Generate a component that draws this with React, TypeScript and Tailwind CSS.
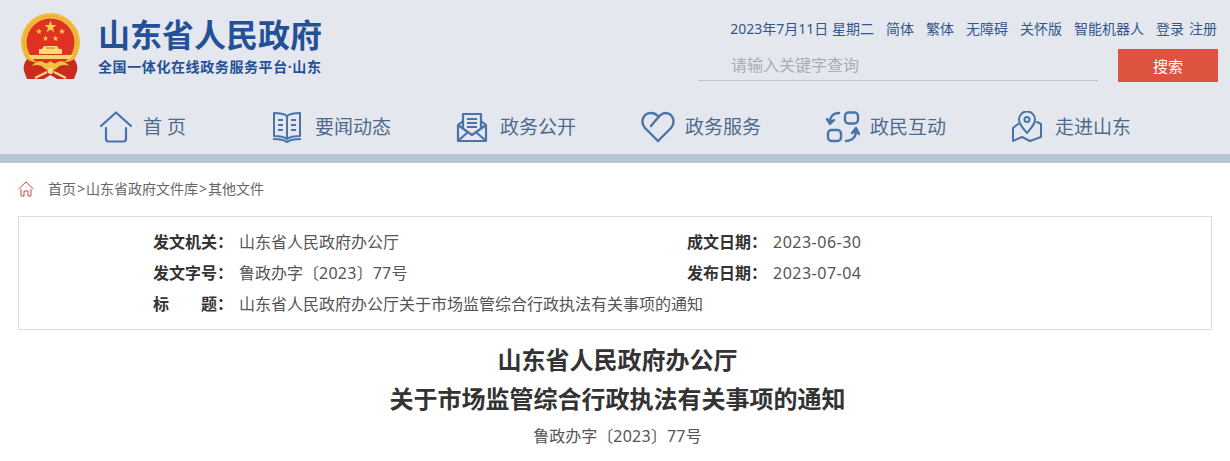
const cjk = "font-['Noto_Sans','Noto_Sans_CJK_SC',sans-serif]";

function star(cx: number, cy: number, r: number) {
    const pts: string[] = [];
    for (let i = 0; i < 10; i++) {
        const rad = i % 2 === 0 ? r : r * 0.4;
        const a = (Math.PI / 5) * i - Math.PI / 2;
        pts.push(`${(cx + rad * Math.cos(a)).toFixed(2)},${(cy + rad * Math.sin(a)).toFixed(2)}`);
    }
    return pts.join(" ");
}

function Emblem() {
    return (
        <svg width="62" height="66" viewBox="0 0 62 66">
            <circle cx="30.500" cy="29.500" r="29.500" fill="#f0bd3f" />
            <circle cx="30.500" cy="29.500" r="26.500" fill="none" stroke="#e5a92e" strokeWidth="1" />
            <circle cx="30.500" cy="29.500" r="24" fill="#e03222" />
            <polygon points={star(30.5, 14, 6.5)} fill="#f8d04a" />
            <polygon points={star(19, 18.5, 3.2)} fill="#f8d04a" />
            <polygon points={star(42, 18.5, 3.2)} fill="#f8d04a" />
            <polygon points={star(25.5, 25.5, 3)} fill="#f8d04a" />
            <polygon points={star(35.5, 25.5, 3)} fill="#f8d04a" />
            <path d="M24 33 L37 33 L39 36 L42 36 L42 41 L19 41 L19 36 L22 36Z" fill="#f8dc7c" />
            <rect x="26" y="34" width="9" height="2" fill="#e8a93a" />
            <path d="M8 42 H53 L50 46 H11Z" fill="#f7d670" />
            <path d="M7 46 C4 50 3 54 4 58 L7 66 L24 66 L30.500 62 L37 66 L54 66 L57 58 C58 54 57 50 54 46 C48 51 38 49 30.500 49 C23 49 13 51 7 46Z" fill="#cb2a1f" />
            <path d="M12 53 C15 48 21 47 25 50 C27 51 29 49 30.500 48 C32 49 34 51 36 50 C40 47 46 48 49 53 C44 51 40 52 37 55 C34 58 27 58 24 55 C21 52 17 51 12 53Z" fill="#f2c23e" />
            <circle cx="30.500" cy="58" r="3" fill="#f8dc7c" />
            <path d="M15 65 L27 59 M46 65 L34 59" stroke="#f8dc7c" strokeWidth="2" />
        </svg>
    );
}

const navIcons = {
    home: (
        <svg width="34" height="32" viewBox="0 0 34 32" fill="none" stroke="#4a74a8" strokeWidth="2.200" strokeLinecap="round" strokeLinejoin="round">
            <path d="M2 15 L17 1.500 L32 15" />
            <path d="M7 17 V28 a2.500 2.500 0 0 0 2.500 2.500 H24.500 a2.500 2.500 0 0 0 2.500 -2.500 V17" />
        </svg>
    ),
    book: (
        <svg width="32" height="32" viewBox="0 0 32 32" fill="none" stroke="#4a74a8" strokeWidth="2" strokeLinejoin="round">
            <path d="M16 5 C12 2 6 2 3 2 V25 C7 25 12 25 16 28 C20 25 25 25 29 25 V2 C26 2 20 2 16 5Z" />
            <path d="M16 5 V28" />
            <path d="M7 9 H12 M7 14 H12 M7 19 H12 M20 9 H25 M20 14 H25 M20 19 H25" />
            <path d="M2 28 C7 28 12 28 16 31 C20 28 25 28 30 28" strokeWidth="2.200" />
        </svg>
    ),
    mail: (
        <svg width="32" height="32" viewBox="0 0 32 32" fill="none" stroke="#4a74a8" strokeWidth="2.200" strokeLinejoin="round">
            <path d="M7 17 V3 H25 V17" />
            <path d="M11 8 H21 M11 12 H21 M11 16 H21" />
            <path d="M7 10 L2 14 V30 H30 V14 L25 10" />
            <path d="M2 14 L16 24 L30 14" />
            <path d="M2 30 L12 21 M30 30 L20 21" />
        </svg>
    ),
    heart: (
        <svg width="34" height="32" viewBox="0 0 34 32" fill="none" stroke="#4a74a8" strokeWidth="2.400" strokeLinecap="round" strokeLinejoin="round">
            <path d="M17 30 L4 17 C-1 11 2 2 10 2 C13 2 15 3 17 5" />
            <path d="M17 30 L30 17 C35 11 32 2 24 2 C21 2 19.500 3.500 10 15" />
        </svg>
    ),
    swap: (
        <svg width="34" height="32" viewBox="0 0 34 32" fill="none" stroke="#4a74a8" strokeWidth="2.400" strokeLinecap="round" strokeLinejoin="round">
            <rect x="19" y="1.500" width="13" height="11" rx="3.500" />
            <rect x="2" y="19" width="13" height="11" rx="3.500" />
            <path d="M13 2 C7 2 4 6 4 11" />
            <path d="M1 8 L4 13 L8 9" fill="#4a74a8" />
            <path d="M20 30 C26 30 30 26 30 20" />
            <path d="M26 22 L30 17 L33 23" fill="#4a74a8" />
        </svg>
    ),
    map: (
        <svg width="32" height="32" viewBox="0 0 32 32" fill="none" stroke="#4a74a8" strokeWidth="2" strokeLinecap="round" strokeLinejoin="round">
            <path d="M16 22 C11 16 8 13 8 8.500 A8 8 0 0 1 24 8.500 C24 13 21 16 16 22Z" />
            <circle cx="16" cy="8.500" r="2.500" />
            <path d="M7 13 L2 17 V30 L11 26 L19 30 L30 26 V13 L26 11" />
        </svg>
    ),
};

function NavItem({icon, label, className}: {icon: React.ReactNode; label: string; className: string}) {
    return (
        <a className={`flex items-center pt-[11px] ${className}`}>
            <span className="flex w-[44px] shrink-0 items-center">{icon}</span>
            <span className="text-[19px] leading-[28px] text-[#4e6a8e]">{label}</span>
        </a>
    );
}

function InfoRow({label, value, className}: {label: React.ReactNode; value: React.ReactNode; className: string}) {
    return (
        <div className={`flex h-[31px] items-center text-[16px] ${className}`}>
            <b className="w-[86px] shrink-0 font-bold text-[#333]">{label}</b>
            <span className="whitespace-nowrap text-[#555]">{value}</span>
        </div>
    );
}

function Num({children}: {children: React.ReactNode}) {
    return <span className="tracking-[0.5px]">{children}</span>;
}

function DocNo() {
    return <>鲁政办字〔<span className="tracking-[0.25px]">2023</span>〕<span className="tracking-[0.25px]">77</span>号</>;
}

export default function App() {
    const links = ["简体", "繁体", "无障碍", "关怀版", "智能机器人"];

    return (
        <div className={`h-[461px] w-[1230px] overflow-hidden bg-white ${cjk}`}>
            <header className="h-[163px] border-b-[9px] border-[#b5c6d7] bg-[#e4e8ee]">
                <div className="flex h-[100px] justify-between pl-[20px] pr-[12px]">
                    <div className="flex pt-[13px]">
                        <Emblem />
                        <div className="ml-[16px]">
                            <h1 className="mt-[3px] text-[32px] font-bold leading-[38px] text-[#245097]">山东省人民政府</h1>
                            <p className="mt-[3px] text-[14px] font-bold leading-[20px] tracking-[0.6px] text-[#245097]">全国一体化在线政务服务平台·山东</p>
                        </div>
                    </div>
                    <div className="w-[520px] pt-[18px]">
                        <div className="flex h-[20px] items-center justify-end pr-[1px] text-[14px] text-[#34568b]">
                            <span>2023年7月11日 星期二</span>
                            {links.map((l) => (
                                <a key={l} className="ml-[12px]">{l}</a>
                            ))}
                            <a className="ml-[12px]">登录</a>
                            <a className="ml-[5px]">注册</a>
                        </div>
                        <div className="mt-[11px] flex justify-between">
                            <div className="h-[32px] w-[400px] border-b border-[#bcc4d0] pl-[33px] text-[16px] leading-[33px] text-[#a9aeb5]">请输入关键字查询</div>
                            <button className="h-[33px] w-[100px] bg-[#dd5340] pt-[2px] text-[15px] text-white">搜索</button>
                        </div>
                    </div>
                </div>
                <nav className="flex h-[54px] items-start pl-[99px]">
                    <NavItem icon={navIcons.home} label="首 页" className="w-[172px]" />
                    <NavItem icon={navIcons.book} label="要闻动态" className="w-[185px]" />
                    <NavItem icon={navIcons.mail} label="政务公开" className="w-[185px]" />
                    <NavItem icon={navIcons.heart} label="政务服务" className="w-[185px]" />
                    <NavItem icon={navIcons.swap} label="政民互动" className="w-[185px]" />
                    <NavItem icon={navIcons.map} label="走进山东" className="w-[185px]" />
                </nav>
            </header>

            <div className="flex h-[53px] items-center pb-[2px] pl-[18px] text-[14px] text-[#666]">
                <svg width="16" height="16" viewBox="0 0 16 16" fill="none" stroke="#c8464a" strokeWidth="1" strokeLinejoin="round" className="mr-[14px]">
                    <path d="M.5 8 L8 1 L15.500 8" />
                    <path d="M3 8 V15 H6 V10 H10 V15 H13 V8" />
                </svg>
                <span>首页<span className="mx-[1px]">&gt;</span>山东省政府文件库<span className="mx-[1px]">&gt;</span>其他文件</span>
            </div>

            <section className="mx-[18px] h-[114px] border border-[#dcdcdc] pt-[9px]">
                <div className="flex pl-[134px]">
                    <InfoRow label="发文机关：" value="山东省人民政府办公厅" className="w-[534px]" />
                    <InfoRow label="成文日期：" value={<Num>2023-06-30</Num>} className="" />
                </div>
                <div className="flex pl-[134px]">
                    <InfoRow label="发文字号：" value={<DocNo />} className="w-[534px]" />
                    <InfoRow label="发布日期：" value={<Num>2023-07-04</Num>} className="" />
                </div>
                <div className="pl-[134px]">
                    <InfoRow
                        label={<span className="flex w-[80px] justify-between"><span>标</span><span>题：</span></span>}
                        value="山东省人民政府办公厅关于市场监管综合行政执法有关事项的通知"
                        className=""
                    />
                </div>
            </section>

            <article className="w-[1235px] pt-[10px] text-center">
                <h2 className="text-[24px] font-bold leading-[39px] text-[#333]">山东省人民政府办公厅</h2>
                <h2 className="text-[24px] font-bold leading-[39px] text-[#333]">关于市场监管综合行政执法有关事项的通知</h2>
                <p className="mt-[4px] text-[16px] leading-[28px] text-[#555]"><DocNo /></p>
            </article>
        </div>
    );
}
